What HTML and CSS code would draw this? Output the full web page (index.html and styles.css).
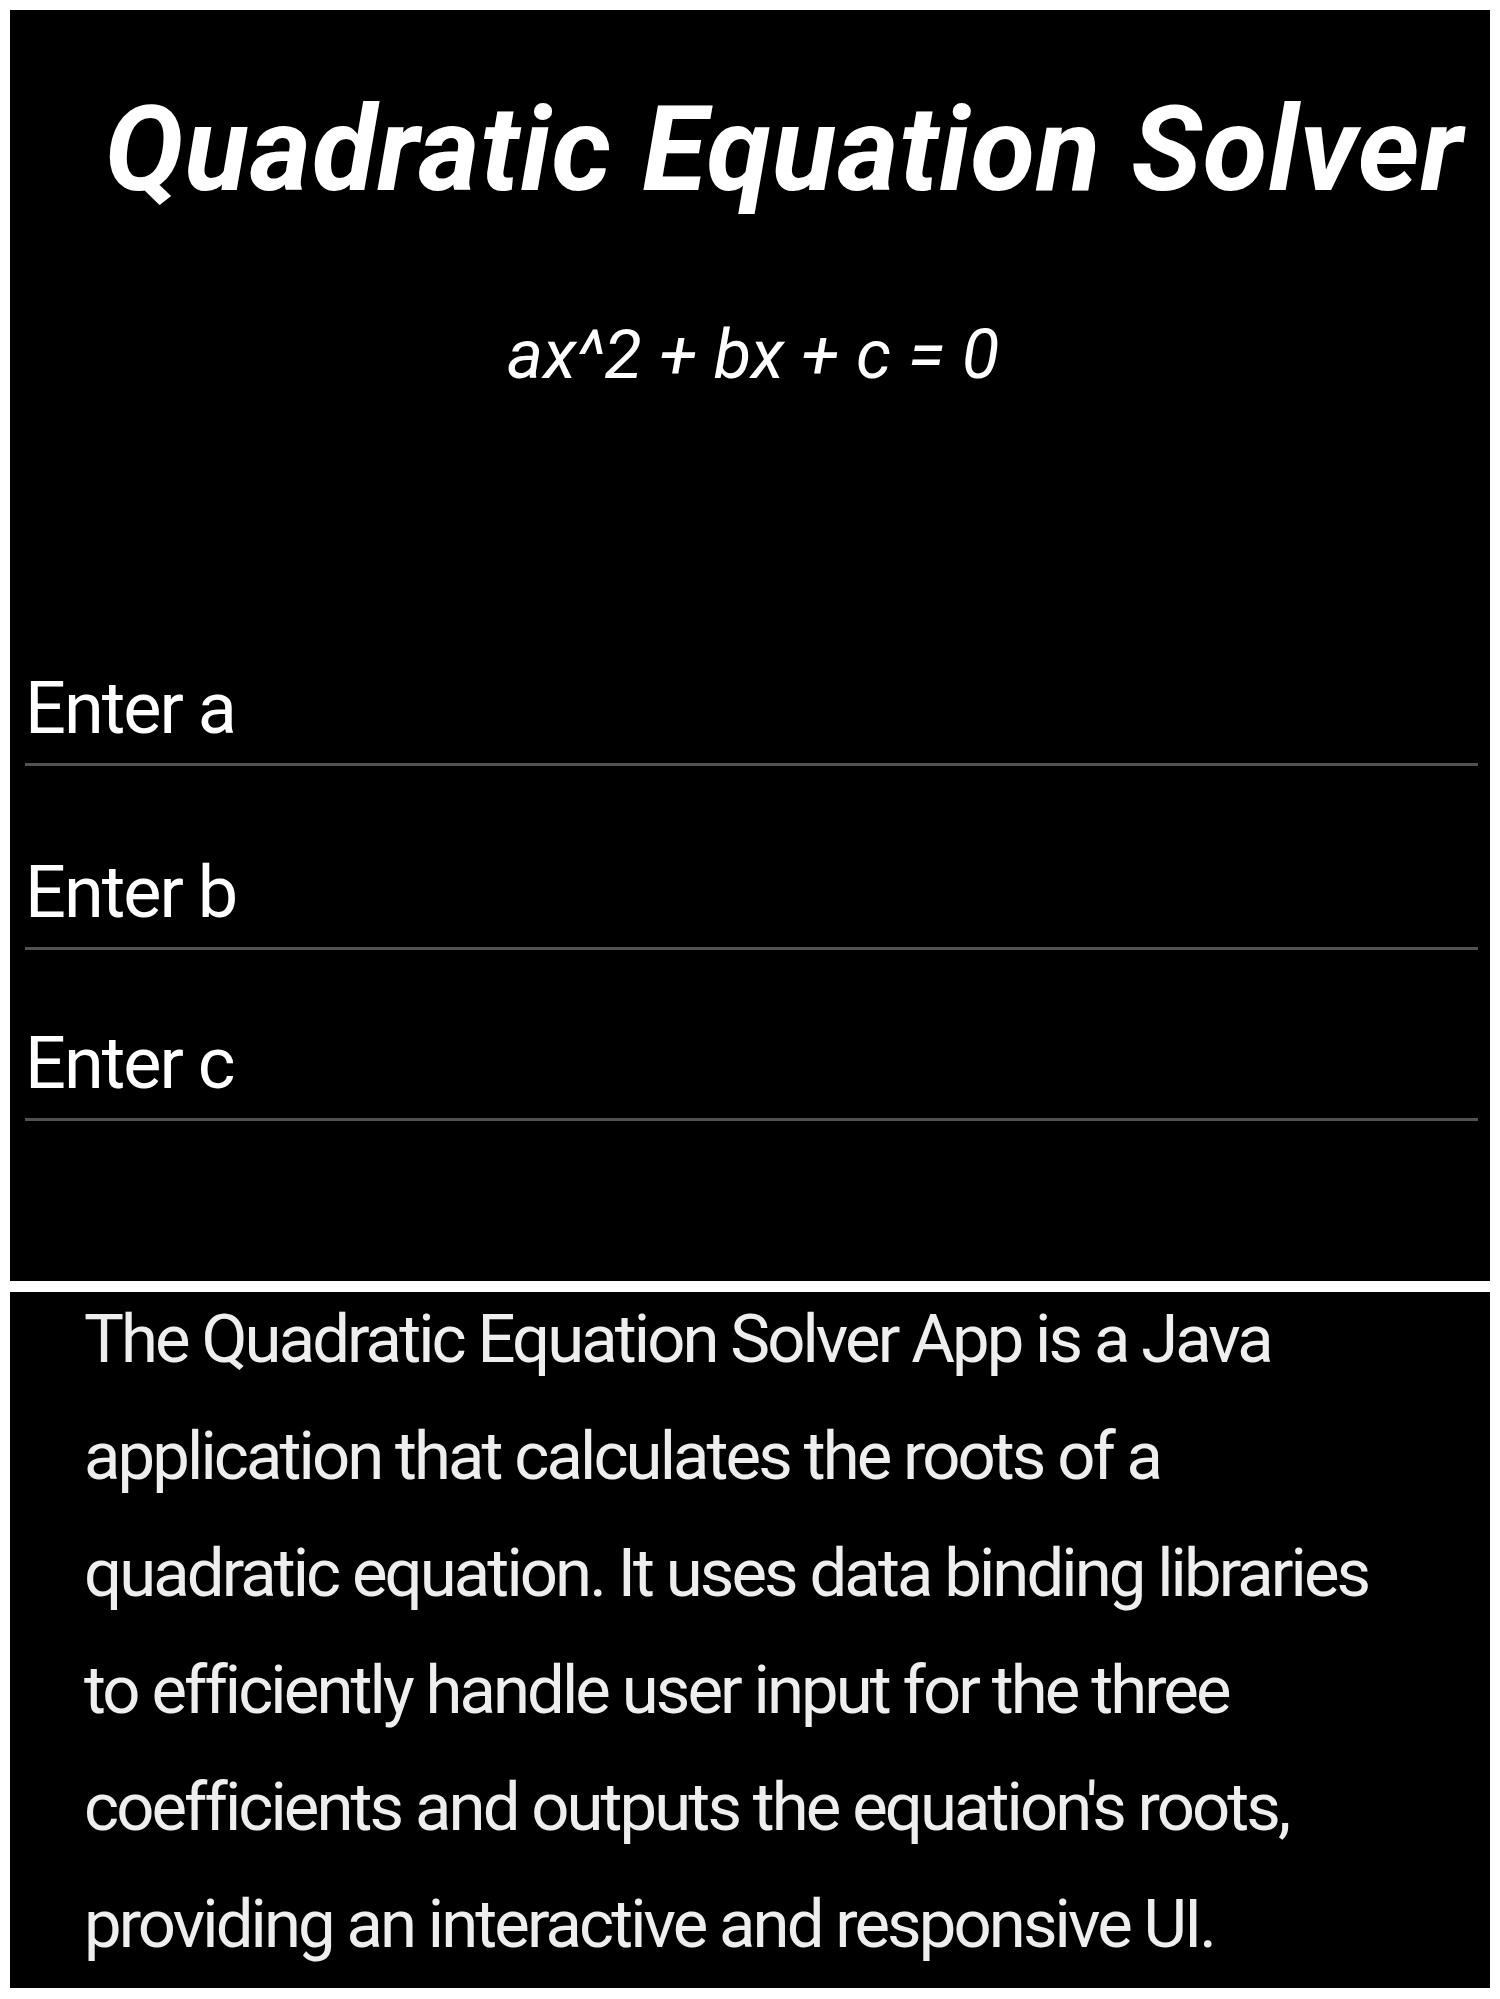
FILE: index.html
```html
<!DOCTYPE html>
<html lang="en">
<head>
<meta charset="utf-8">
<title>Quadratic Equation Solver</title>
<link rel="stylesheet" href="styles.css">
</head>
<body>
  <main class="page">
    <section class="app-panel">
      <h1 class="title">Quadratic Equation Solver</h1>
      <p class="equation">ax^2 + bx + c = 0</p>
      <div class="fields">
        <div class="field field-a"><span class="hint">Enter a</span></div>
        <div class="field field-b"><span class="hint">Enter b</span></div>
        <div class="field field-c"><span class="hint">Enter c</span></div>
      </div>
    </section>
    <section class="desc-panel">
      <p class="desc">The Quadratic Equation Solver App is a Java<br>application that calculates the roots of a<br>quadratic equation. It uses data binding libraries<br>to efficiently handle user input for the three<br>coefficients and outputs the equation's roots,<br>providing an interactive and responsive UI.</p>
    </section>
  </main>
</body>
</html>
```

FILE: styles.css
```css
html, body {
  margin: 0;
  padding: 0;
  background: #ffffff;
}

body {
  font-family: Roboto, "Liberation Sans", sans-serif;
}

.page {
  padding: 10px;
  display: flex;
  flex-direction: column;
  gap: 11px;
}

.app-panel {
  background: #000000;
  height: 1271px;
  display: flex;
  flex-direction: column;
}

.title {
  margin: 71px 0 0 0;
  font-size: 118px;
  line-height: 138px;
  font-weight: 700;
  font-style: italic;
  color: #ffffff;
  text-align: center;
  padding-left: 68px;
  letter-spacing: 1px;
  white-space: nowrap;
}

.equation {
  margin: 95px 0 0 0;
  padding-left: 6px;
  font-size: 69px;
  line-height: 82px;
  font-style: italic;
  font-weight: 400;
  color: #ffffff;
  text-align: center;
}

.fields {
  display: flex;
  flex-direction: column;
  margin: 270px 12px 0 15px;
}

.field {
  border-bottom: 3px solid #505055;
  padding-bottom: 11px;
}

.field-b {
  margin-top: 84px;
}

.field-c {
  margin-top: 71px;
}

.hint {
  display: block;
  font-size: 72px;
  line-height: 86px;
  color: #ffffff;
  letter-spacing: -2px;
}

.desc-panel {
  background: #000000;
  height: 696px;
  display: flex;
  flex-direction: column;
  overflow: hidden;
}

.desc {
  margin: -11px 0 0 0;
  padding-left: 74px;
  font-size: 67px;
  line-height: 117px;
  color: #eeeeee;
  letter-spacing: -2.9px;
}
```
